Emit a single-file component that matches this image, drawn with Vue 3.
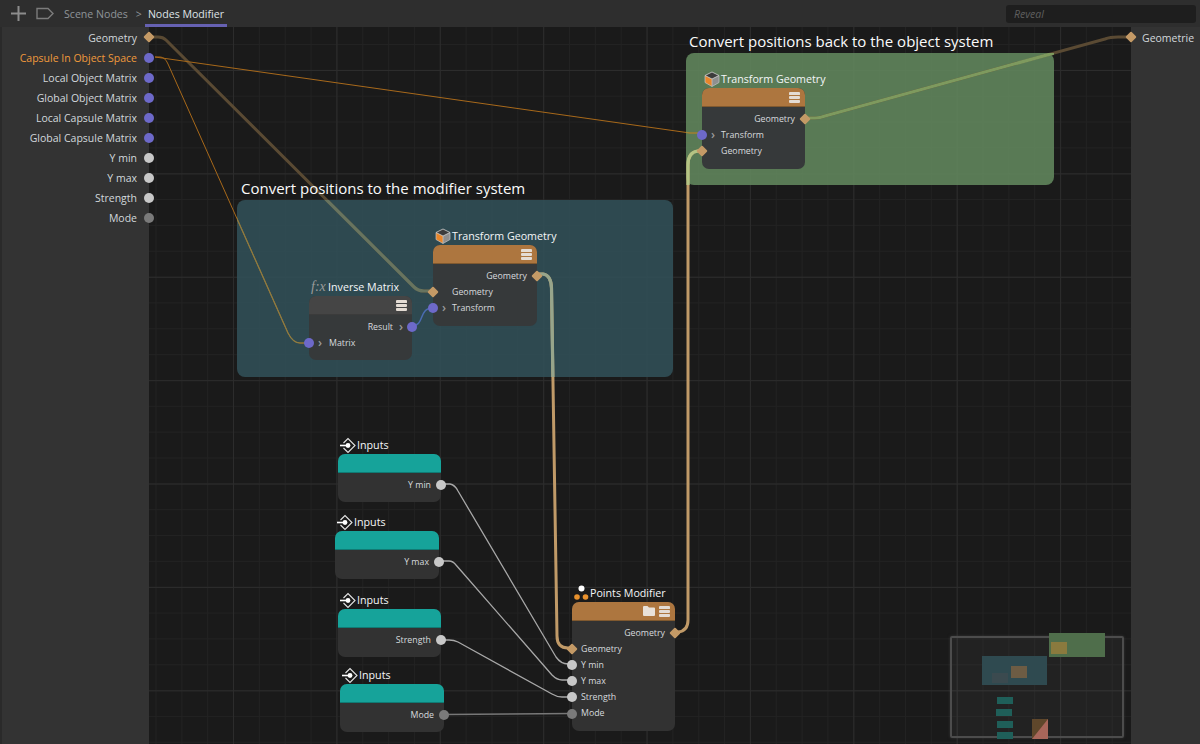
<script setup>
const ORIGIN_X = 149
const ORIGIN_Y = 27

const leftPorts = [
  { label: 'Geometry', kind: 'diamond' },
  { label: 'Capsule In Object Space', kind: 'purple', active: true },
  { label: 'Local Object Matrix', kind: 'purple' },
  { label: 'Global Object Matrix', kind: 'purple' },
  { label: 'Local Capsule Matrix', kind: 'purple' },
  { label: 'Global Capsule Matrix', kind: 'purple' },
  { label: 'Y min', kind: 'white' },
  { label: 'Y max', kind: 'white' },
  { label: 'Strength', kind: 'white' },
  { label: 'Mode', kind: 'grey' }
]

const groups = [
  { title: 'Convert positions to the modifier system', x: 237, y: 200, w: 436, h: 177, cls: 'teal', tx: 4 },
  { title: 'Convert positions back to the object system', x: 686, y: 53, w: 368, h: 132, cls: 'green', tx: 3 }
]

const nodes = [
  {
    title: 'Transform Geometry', icon: 'cube', x: 433, y: 245, w: 104, cls: 'brown tinted',
    rows: [
      { text: 'Geometry', side: 'out', kind: 'diamond' },
      { text: 'Geometry', side: 'in', kind: 'diamond', indent: 19 },
      { text: 'Transform', side: 'in', kind: 'purple', indent: 19, chevron: true }
    ]
  },
  {
    title: 'Inverse Matrix', icon: 'fx', x: 309, y: 296, w: 103, cls: 'grey tinted',
    rows: [
      { text: 'Result', side: 'out', kind: 'purple', chevron: true },
      { text: 'Matrix', side: 'in', kind: 'purple', indent: 20, chevron: true }
    ]
  },
  {
    title: 'Transform Geometry', icon: 'cube', x: 702, y: 88, w: 103, cls: 'brown tinted',
    rows: [
      { text: 'Geometry', side: 'out', kind: 'diamond' },
      { text: 'Transform', side: 'in', kind: 'purple', indent: 19, chevron: true },
      { text: 'Geometry', side: 'in', kind: 'diamond', indent: 19 }
    ]
  },
  { title: 'Inputs', icon: 'input', x: 338, y: 454, w: 103, cls: 'aqua', rows: [{ text: 'Y min', side: 'out', kind: 'white' }] },
  { title: 'Inputs', icon: 'input', x: 335, y: 531, w: 104, cls: 'aqua', rows: [{ text: 'Y max', side: 'out', kind: 'white' }] },
  { title: 'Inputs', icon: 'input', x: 338, y: 609, w: 103, cls: 'aqua', rows: [{ text: 'Strength', side: 'out', kind: 'white' }] },
  { title: 'Inputs', icon: 'input', x: 340, y: 684, w: 104, cls: 'aqua', rows: [{ text: 'Mode', side: 'out', kind: 'grey' }] },
  {
    title: 'Points Modifier', icon: 'points', x: 572, y: 602, w: 103, cls: 'brown', folder: true,
    rows: [
      { text: 'Geometry', side: 'out', kind: 'diamond' },
      { text: 'Geometry', side: 'in', kind: 'diamond', indent: 9 },
      { text: 'Y min', side: 'in', kind: 'white', indent: 9 },
      { text: 'Y max', side: 'in', kind: 'white', indent: 9 },
      { text: 'Strength', side: 'in', kind: 'white', indent: 9 },
      { text: 'Mode', side: 'in', kind: 'grey', indent: 9 }
    ]
  }
]

const wires = [
  { d: 'M149 37 H158 Q163 37 166 40 L414 287 Q418 291 424 291 H433', c: '#5a4a33', w: 3, teal: '#68745f' },
  { d: 'M155 57 L690 133 H702', c: '#a8691a', w: 1, green: '#a08a3a' },
  { d: 'M155 57 H160 Q165 57 168 64 L288 333 Q293 343 300 343 H309', c: '#a8691a', w: 1, teal: '#8c7c44' },
  { d: 'M412 326 C425 326 418 308 433 308', c: '#4a6cb0', w: 1.5 },
  { d: 'M537 274 H543 Q551 275 551.5 288 L557 636 Q557 648 568 648 H572', c: '#c09a68', w: 3, teal: '#97a58b' },
  { d: 'M675 632 H678 Q688 631 688 620 L688 165 Q688 152 698 151 H702', c: '#c09a68', w: 3, green: '#b4c484' },
  { d: 'M805 118 H815 Q820 118 825 116 L1105 39 Q1110 37 1118 37 H1130', c: '#5a4a33', w: 3, green: '#7e9a5e' },
  { d: 'M441 484 H450 Q455 485 458 491 L556 657 Q561 664 568 664 H572', c: '#a8a8a8', w: 1.3 },
  { d: 'M439 561 H449 Q453 561 456 565 L552 675 Q557 680 562 680 H572', c: '#a8a8a8', w: 1.3 },
  { d: 'M441 640 H449 Q454 640 458 642 L552 694 Q557 697 562 697 H572', c: '#a8a8a8', w: 1.3 },
  { d: 'M444 714.5 L572 713.5', c: '#777777', w: 1.5 }
]

const mini = [
  { x: 1049, y: 633, w: 56, h: 24, c: '#4f6e4b' },
  { x: 1051, y: 642, w: 16, h: 12, c: '#8a7a3e' },
  { x: 982, y: 656, w: 65, h: 29, c: '#2f4a50' },
  { x: 1011, y: 666, w: 16, h: 12, c: '#6d5c44' },
  { x: 992, y: 673, w: 16, h: 10, c: '#3b4a4f' },
  { x: 997, y: 697, w: 16, h: 7, c: '#1f5f59' },
  { x: 996, y: 709, w: 16, h: 7, c: '#1f5f59' },
  { x: 997, y: 721, w: 16, h: 7, c: '#1f5f59' },
  { x: 997, y: 732, w: 16, h: 7, c: '#1f5f59' }
]

const place = (o) => ({
  left: `${o.x - ORIGIN_X}px`,
  top: `${o.y - ORIGIN_Y}px`,
  width: o.w ? `${o.w}px` : undefined,
  height: o.h ? `${o.h}px` : undefined
})
const miniStyle = (m) => ({ ...place(m), background: m.c })
const rowStyle = (r) => (r.side === 'in'
  ? { paddingLeft: `${r.indent}px` }
  : { paddingRight: r.chevron ? '19px' : '10px' })
</script>

<template>
  <div class="app">
    <header class="topbar">
      <svg class="ic-plus" width="17" height="17" viewBox="0 0 17 17"><path d="M8.5 1 V16 M1 8.5 H16" stroke="#8c8c8c" stroke-width="2" fill="none" /></svg>
      <svg class="ic-tag" width="18" height="13" viewBox="0 0 18 13"><path d="M1 1.5 H12 L17 6.5 L12 11.5 H1 Z" stroke="#7c7c7c" stroke-width="1.4" fill="none" /></svg>
      <span class="crumb">Scene Nodes</span>
      <span class="sep">&gt;</span>
      <span class="crumb current">Nodes Modifier</span>
      <div class="reveal">Reveal</div>
    </header>

    <div class="main">
      <aside class="panel left">
        <div v-for="p in leftPorts" :key="p.label" class="pl-row" :class="{ active: p.active }">
          {{ p.label }}
          <i class="port panel-port" :class="p.kind"></i>
        </div>
      </aside>

      <section class="canvas">
        <div v-for="g in groups" :key="g.title" class="group" :class="g.cls" :style="place(g)">
          <div class="group-title" :style="{ left: g.tx + 'px' }">{{ g.title }}</div>
        </div>

        <svg class="wires" viewBox="149 27 982 717">
          <defs>
            <clipPath id="clip-teal"><rect x="237" y="200" width="436" height="177" /></clipPath>
            <clipPath id="clip-green"><rect x="686" y="53" width="368" height="132" /></clipPath>
          </defs>
          <path v-for="(l, i) in wires" :key="i" :d="l.d" :stroke="l.c" :stroke-width="l.w" fill="none" />
          <g clip-path="url(#clip-teal)">
            <template v-for="(l, i) in wires" :key="i">
              <path v-if="l.teal" :d="l.d" :stroke="l.teal" :stroke-width="l.w + 0.2" fill="none" />
            </template>
          </g>
          <g clip-path="url(#clip-green)">
            <template v-for="(l, i) in wires" :key="i">
              <path v-if="l.green" :d="l.d" :stroke="l.green" :stroke-width="l.w + 0.2" fill="none" />
            </template>
          </g>
        </svg>

        <div v-for="n in nodes" :key="n.x + '-' + n.y" class="node" :class="n.cls" :style="place(n)">
          <div class="node-title">
            <svg v-if="n.icon === 'cube'" width="16" height="18" viewBox="0 0 16 18">
              <path d="M8 2 L15 5.5 L8 9 L1 5.5 Z" fill="#3c3c3c" />
              <path d="M8 9 L15 5.5 V12.5 L8 16.5 Z" fill="#8f8f8f" />
              <path d="M8 9 L1 5.5 V12.5 L8 16.5 Z" fill="#e8862a" />
              <path d="M8 2 L15 5.5 L8 9 L1 5.5 Z" fill="none" stroke="#d0d0d0" stroke-width="0.8" />
              <path d="M1 5.5 V12.5 L8 16.5 L15 12.5 V5.5 M8 9 V16.5" fill="none" stroke="#c4c4c4" stroke-width="0.7" />
            </svg>
            <span v-else-if="n.icon === 'fx'" class="fx">f:x</span>
            <svg v-else-if="n.icon === 'input'" width="16" height="17" viewBox="0 0 16 17">
              <path d="M3.5 6 L8 1.5 L15 8.5 L8 15.5 L3.5 11" fill="none" stroke="#e6e6e6" stroke-width="1.1" />
              <path d="M0 8.5 H8" stroke="#fff" stroke-width="1.6" />
              <circle cx="8" cy="8.5" r="2.4" fill="#fff" />
            </svg>
            <svg v-else-if="n.icon === 'points'" width="15" height="16" viewBox="0 0 15 16">
              <circle cx="7.5" cy="3.5" r="3" fill="#fff" />
              <circle cx="3" cy="12" r="2.8" fill="#e8912d" />
              <circle cx="11.5" cy="12" r="2.8" fill="#e8912d" />
            </svg>
            <span>{{ n.title }}</span>
          </div>

          <div class="node-head">
            <svg v-if="n.folder" width="12" height="10" viewBox="0 0 12 10"><path d="M0 1 Q0 0 1 0 H4.5 L6 1.5 H11 Q12 1.5 12 2.5 V9 Q12 10 11 10 H1 Q0 10 0 9 Z" fill="#e9e2da" /></svg>
            <svg width="11" height="11" viewBox="0 0 11 11"><path d="M1 0 H10 Q11 0 11 1 V2.4 Q11 3 10 3 H1 Q0 3 0 2.4 V1 Q0 0 1 0 Z M1 4 H10 Q11 4 11 5 V6 Q11 7 10 7 H1 Q0 7 0 6 V5 Q0 4 1 4 Z M1 8 H10 Q11 8 11 8.6 V10 Q11 11 10 11 H1 Q0 11 0 10 V8.6 Q0 8 1 8 Z" fill="#e4dcd4" /></svg>
          </div>

          <div class="node-body">
            <div v-for="(r, i) in n.rows" :key="i" class="row" :class="r.side" :style="rowStyle(r)">
              <i class="port" :class="r.kind"></i>
              <span v-if="r.chevron" class="chev">›</span>
              {{ r.text }}
            </div>
          </div>
        </div>

        <div class="minimap-frame"></div>
        <div class="minimap-items">
          <div v-for="(m, i) in mini" :key="i" class="mini" :style="miniStyle(m)"></div>
          <svg class="mini-points" width="16" height="20" viewBox="0 0 16 20">
            <rect width="16" height="20" fill="#5f472b" />
            <path d="M16 0 V20 H0 Z" fill="#a8665a" />
          </svg>
        </div>
      </section>

      <aside class="panel right">
        <div class="pr-row">
          <i class="port panel-port diamond"></i>
          Geometrie
        </div>
      </aside>
    </div>
  </div>
</template>

<style scoped>
.app {
  width: 1200px;
  height: 744px;
  display: flex;
  flex-direction: column;
  overflow: hidden;
  background: #2f2f2f;
  font-family: "Open Sans", "Noto Sans", sans-serif;
  font-size: 10.5px;
  color: #d2d8dc;
}
.topbar {
  height: 27px;
  flex: none;
  display: flex;
  align-items: center;
  background: #2e2e2e;
  position: relative;
}
.ic-plus { margin-left: 10px; }
.ic-tag { margin-left: 9px; }
.crumb { font-size: 10.6px; color: #8e9498; }
.ic-tag + .crumb { margin-left: 10px; }
.sep { margin: 0 3px 0 8px; color: #8e9498; font-size: 10.5px; }
.crumb.current {
  color: #dfe3e6;
  position: relative;
  padding: 0 3px;
}
.crumb.current::after {
  content: "";
  position: absolute;
  left: 0;
  right: 0;
  top: 17px;
  height: 3px;
  background: #6661b2;
}
.reveal {
  margin-left: auto;
  margin-right: 4px;
  width: 182px;
  height: 18px;
  padding-left: 8px;
  line-height: 18px;
  border-radius: 3px;
  background: #1e1e1e;
  color: #5f5f5f;
  font-style: italic;
}
.main {
  flex: 1;
  display: flex;
  min-height: 0;
}
.panel {
  background: #333333;
  flex: none;
  position: relative;
  z-index: 3;
}
.panel.left {
  width: 149px;
  box-sizing: border-box;
  padding-right: 12px;
  box-shadow: inset 2px 0 0 #2a2a2a;
}
.panel.right {
  width: 69px;
  box-sizing: border-box;
  padding-left: 11px;
}
.pl-row,
.pr-row {
  height: 20px;
  line-height: 22px;
  text-align: right;
  position: relative;
  white-space: nowrap;
}
.pr-row { text-align: left; }
.pl-row.active { color: #f09a3c; }
.port {
  position: absolute;
  top: 50%;
  width: 10px;
  height: 10px;
  margin-top: -5px;
  border-radius: 50%;
}
.port.purple { background: #6d69c9; }
.port.white { background: #c8c8c8; }
.port.grey { background: #7a7a7a; }
.port.diamond {
  width: 8px;
  height: 8px;
  margin-top: -4px;
  border-radius: 1px;
  background: #c49a66;
  transform: rotate(45deg);
}
.pl-row .panel-port { right: -17px; margin-top: -4.5px; }
.pl-row .panel-port.diamond { right: -16px; margin-top: -4px; }
.pr-row .panel-port.diamond { left: -15px; }
.canvas {
  flex: 1;
  position: relative;
  overflow: hidden;
  background-color: #1a1a1a;
  background-image:
    linear-gradient(to right, #2c2c2c 1px, transparent 1px),
    linear-gradient(to bottom, #2c2c2c 1px, transparent 1px),
    linear-gradient(to right, #222222 1px, transparent 1px),
    linear-gradient(to bottom, #222222 1px, transparent 1px);
  background-size: 103.4px 103.4px, 103.4px 103.4px, 25.85px 25.85px, 25.85px 25.85px;
  background-position: 84px 43px, 84px 43px, 6.5px 17px, 6.5px 17px;
}
.group {
  position: absolute;
  border-radius: 8px;
}
.group.teal { background: rgba(49, 79, 86, 0.9); }
.group.green { background: rgba(96, 133, 92, 0.9); }
.group-title {
  position: absolute;
  z-index: 1;
  bottom: 100%;
  margin-bottom: 1px;
  font-size: 15px;
  line-height: 21px;
  color: #fbfbfb;
  white-space: nowrap;
}
.wires {
  position: absolute;
  inset: 0;
  width: 982px;
  height: 717px;
}
.node {
  position: absolute;
  z-index: 1;
  border-radius: 7px;
  background: #323232;
}
.node.tinted { background: #36393a; }
.node.grey .node-head { background: #454545; border-bottom-color: #3b3b3b; }
.node.brown .node-head { background: #ad763f; border-bottom-color: #80592f; }
.node.aqua .node-head { background: #16a39a; border-bottom-color: #107b74; }
.node.aqua .node-head svg { display: none; }
.node-title {
  position: absolute;
  left: 2px;
  bottom: 100%;
  height: 18px;
  display: flex;
  align-items: center;
  gap: 1px;
  color: #f4f6f8;
  font-size: 10.7px;
  white-space: nowrap;
}
.fx {
  width: 16px;
  font-family: "Liberation Serif", serif;
  font-style: italic;
  font-size: 14px;
  color: #9a9a9a;
}
.node-head {
  height: 18px;
  border-bottom: 1px solid;
  border-radius: 7px 7px 0 0;
  display: flex;
  align-items: center;
  justify-content: flex-end;
  gap: 4px;
  padding-right: 5px;
}
.node-body {
  padding: 3.5px 0 9.5px;
}
.row {
  height: 16.2px;
  line-height: 16.2px;
  position: relative;
  color: #d6dade;
  font-size: 8.8px;
  white-space: nowrap;
}
.row.out { text-align: right; }
.row.in .port { left: -5px; }
.row.in .port.diamond { left: -4px; }
.row.out .port { right: -5px; }
.row.out .port.diamond { right: -4px; }
.chev {
  position: absolute;
  color: #9a9a9a;
  font-size: 12px;
  font-weight: 600;
}
.row.in .chev { left: 9px; }
.row.out .chev { right: 9px; }
.minimap-items {
  position: absolute;
  inset: 0;
  z-index: 2;
  pointer-events: none;
}
.mini {
  position: absolute;
}
.mini-points {
  position: absolute;
  left: 883px;
  top: 692px;
}
.minimap-frame {
  position: absolute;
  left: 801px;
  top: 609px;
  width: 170px;
  height: 98px;
  border: 2px solid #4c4c4c;
  border-radius: 2px;
  background: rgba(255, 255, 255, 0.035);
  box-shadow: 0 0 3px rgba(80, 80, 80, 0.5);
  z-index: 2;
}
</style>

<style>
html, body { background: #2f2f2f; }
</style>
